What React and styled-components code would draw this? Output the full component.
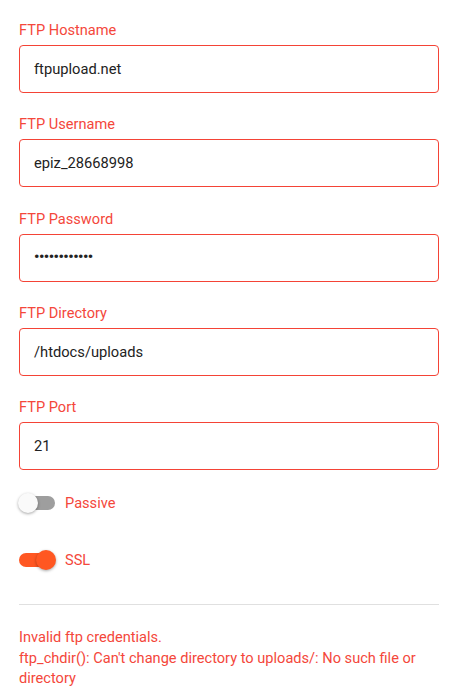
import React from "react";
import styled, { createGlobalStyle } from "styled-components";

const GlobalStyle = createGlobalStyle`
    body {
        margin: 0;
        background: #fff;
        font-family: Roboto, "Liberation Sans", sans-serif;
    }
`;

const Form = styled.div`
    padding: 20px 21px 0 19px;
    .field {
        display: flex;
        flex-direction: column;
        margin-bottom: 21.25px;
    }
    .label {
        font-size: 14.6px;
        line-height: 20px;
        color: #f4473b;
        margin-bottom: 5px;
    }
`;

const Input = styled.div`
    height: 48px;
    box-sizing: border-box;
    border: 1px solid #f44336;
    border-radius: 4px;
    padding: 0 14px;
    display: flex;
    align-items: center;
    font-size: 14.7px;
    color: #222;
`;

const Dots = styled.span`
    font-size: 15px;
    letter-spacing: -0.5px;
    font-weight: 700;
    position: relative;
    top: -1px;
`;

const SwitchRow = styled.div`
    display: flex;
    align-items: center;
    height: 24px;
    margin-top: ${(p) => p.$top}px;
    .text {
        font-size: 14.6px;
        color: #f4473b;
        margin-left: 10px;
    }
`;

const Track = styled.div`
    position: relative;
    width: 36px;
    height: 14px;
    border-radius: 7px;
    background: ${(p) => (p.$on ? "#ff5722" : "#9e9e9e")};
`;

const Thumb = styled.div`
    position: absolute;
    top: -3px;
    left: ${(p) => (p.$on ? "17px" : "-1px")};
    width: 20px;
    height: 20px;
    border-radius: 50%;
    background: ${(p) => (p.$on ? "#ff5722" : "#fafafa")};
    box-shadow: 0 1px 3px rgba(0, 0, 0, 0.35);
`;

const Divider = styled.hr`
    border: none;
    border-top: 1px solid #e0e0e0;
    margin: 32px 0 0;
`;

const ErrorText = styled.div`
    margin-top: 22px;
    font-size: 14.6px;
    line-height: 20.3px;
    color: #f4473b;
`;

const Toggle = ({ on, label, top }) => (
    <SwitchRow $top={top}>
        <Track $on={on}>
            <Thumb $on={on} />
        </Track>
        <span className="text">{label}</span>
    </SwitchRow>
);

const fields = [
    ["FTP Hostname", "ftpupload.net"],
    ["FTP Username", "epiz_28668998"],
    ["FTP Password", null],
    ["FTP Directory", "/htdocs/uploads"],
    ["FTP Port", "21"],
];

export default function App() {
    return (
        <>
            <GlobalStyle />
            <Form>
                {fields.map(([label, value]) => (
                    <div className="field" key={label}>
                        <span className="label">{label}</span>
                        <Input>
                            {value === null ? <Dots>••••••••••••</Dots> : value}
                        </Input>
                    </div>
                ))}
                <Toggle on={false} label="Passive" top={2} />
                <Toggle on={true} label="SSL" top={33} />
                <Divider />
                <ErrorText>
                    Invalid ftp credentials.
                    <br />
                    ftp_chdir(): Can't change directory to uploads/: No such file or directory
                </ErrorText>
            </Form>
        </>
    );
}
